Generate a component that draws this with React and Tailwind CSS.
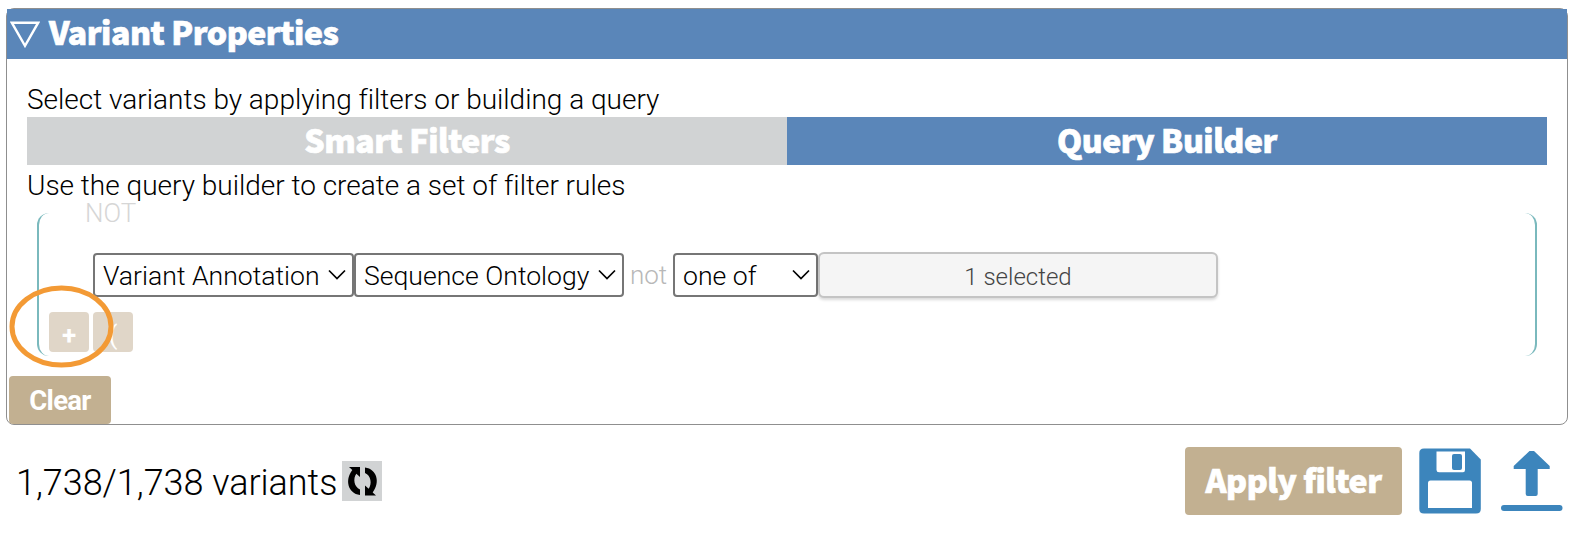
const HEADING =
  "font-['Noto_Sans_CJK_SC','Source_Sans_Pro',sans-serif] font-black text-[32px] tracking-[-0.45px] [-webkit-text-stroke:0.7px_#fff]";

function Select({ label, className }) {
  return (
    <button
      className={`flex h-11 shrink-0 items-center justify-between rounded-[4px] border-2 border-[#767676] bg-white pr-[6px] pl-2 text-[26.6px] text-black ${className}`}
    >
      <span className="pt-px">{label}</span>
      <svg width="18" height="12" viewBox="0 0 18 12" fill="none" stroke="#000" strokeWidth="1.7">
        <path d="M1 1.500 L9 9.500 L17 1.500" />
      </svg>
    </button>
  );
}

function RefreshIcon() {
  return (
    <svg width="40" height="40" viewBox="0 0 40 40" fill="#000">
      <path d="M7 6 H18 V16 L14.300 12.800 C10.800 17.500 12 26 18 28.500 V34 C6 32.500 2.500 19 10.300 9 Z" />
      <path d="M34 34.500 H23 V24.500 L26.700 27.700 C30.200 23 29 14.500 23 12 V6.500 C35 8 38.500 21.500 30.700 31.500 Z" />
    </svg>
  );
}

function SaveIcon() {
  return (
    <svg width="62" height="66" viewBox="0 0 62 66">
      <path d="M5 0.500 H51 L61.800 11.500 V61 Q61.800 65.500 57 65.500 H5 Q0.300 65.500 0.300 61 V5 Q0.300 0.500 5 0.500 Z" fill="#3c85bc" />
      <path d="M17.500 3.500 H46 V22 Q46 24.200 44 24.200 H20 Q17.500 24.200 17.500 22 Z" fill="#fff" />
      <rect x="33" y="6" width="10" height="16" rx="2" fill="#3c85bc" />
      <path d="M9 60 V35 Q9 32.500 11.500 32.500 H50.500 Q53 32.500 53 35 V60 Z" fill="#fff" />
    </svg>
  );
}

function UploadIcon() {
  return (
    <svg width="62" height="60" viewBox="0 0 62 60" fill="#3c85bc">
      <path d="M28.500 0 H33 L48.700 15 V18 H36.700 V43 Q36.700 45 34.700 45 H26.700 Q24.700 45 24.700 43 V18 H12.700 V15 Z" />
      <rect x="0" y="54" width="61.500" height="6" rx="3" />
    </svg>
  );
}

export default function App() {
  return (
    <div className="h-[540px] w-[1584px] overflow-hidden bg-white pt-2 pl-1.5 font-[Roboto,sans-serif] font-light text-black">
      <section className="relative h-[417px] w-[1562px] rounded-[8px] border border-[#8f8f8f]">
        <header className="flex h-[50px] items-center bg-[#5a86b9] pl-[3px] text-white">
          <svg width="30" height="27" viewBox="0 0 30 27" fill="none" stroke="#fff" strokeWidth="2.400">
            <path d="M1.800 1.700 H28.200 L15 24.800 Z" />
          </svg>
          <h1 className={`ml-[9px] pb-[5px] leading-[45px] ${HEADING}`}>Variant Properties</h1>
        </header>

        <div className="h-[315px] px-5 pt-[24px]">
          <p className="h-[34px] text-[28px] leading-[34px] tracking-[-0.01px] whitespace-nowrap">
            Select variants by applying filters or building a query
          </p>
          <div className={`grid h-12 grid-cols-2 text-center leading-[44px] text-white ${HEADING}`}>
            <div className="bg-[#d1d3d4]">Smart Filters</div>
            <div className="bg-[#5a86b9]">Query Builder</div>
          </div>
          <p className="h-12 pt-[3px] text-[28px] leading-[36px] tracking-[-0.01px] whitespace-nowrap">
            Use the query builder to create a set of filter rules
          </p>
          <div className="mx-2.5 flex h-[143px] flex-col rounded-[12px] border-x-2 border-[#7ab9bd] text-[26px]">
            <div className="-mt-[12px] h-[51px] shrink-0 pl-[46px] leading-6 text-[#d6d6d6]">NOT</div>
            <div className="flex h-[46px] shrink-0 items-center pl-[54px]">
              <Select label="Variant Annotation" className="w-[261px]" />
              <Select label="Sequence Ontology" className="w-[270px]" />
              <span className="w-[49px] text-center text-[#b8b8b8]">not</span>
              <Select label="one of" className="w-[145px]" />
              <button className="h-[46px] w-[400px] rounded-[6px] border-2 border-[#c4c4c4] bg-[#f5f5f5] pt-[3px] text-[24px] text-[#444] shadow-[0_2px_3px_rgba(0,0,0,0.15)]">
                1 selected
              </button>
            </div>
            <div className="mt-[14px] flex shrink-0 gap-1 pl-2.5 font-bold text-white">
              <button className="h-10 w-10 rounded-[4px] bg-[#e0d6c8] pt-1">+</button>
              <button className="h-10 w-10 rounded-[4px] bg-[#e0d6c8] pt-1 font-normal">(</button>
            </div>
          </div>
        </div>

        <div className="flex h-[50px] items-start pt-[2px] pl-0.5">
          <button className="h-12 w-[102px] rounded-[4px] bg-[#c2b091] pt-px text-[27.5px] font-bold tracking-[-0.7px] text-white">
            Clear
          </button>
        </div>

        <svg className="absolute top-[276px] left-[2px]" width="106" height="84" viewBox="0 0 106 84">
          <ellipse cx="52.500" cy="41.500" rx="49.500" ry="38.500" fill="none" stroke="#f39a35" strokeWidth="5" />
        </svg>
      </section>

      <footer className="mt-[22px] flex h-[68px] items-center">
        <span className="ml-[10px] w-[326px] pt-[3px] text-[36px] tracking-[-0.04px] whitespace-nowrap">1,738/1,738 variants</span>
        <button className="h-10 w-10 bg-[#d1d3d4]">
          <RefreshIcon />
        </button>
        <button className={`ml-[803px] h-[68px] w-[217px] rounded-[4px] bg-[#c2b091] pb-1 leading-[64px] text-white ${HEADING}`}>
          Apply filter
        </button>
        <button className="ml-[17px]">
          <SaveIcon />
        </button>
        <button className="ml-5">
          <UploadIcon />
        </button>
      </footer>
    </div>
  );
}
